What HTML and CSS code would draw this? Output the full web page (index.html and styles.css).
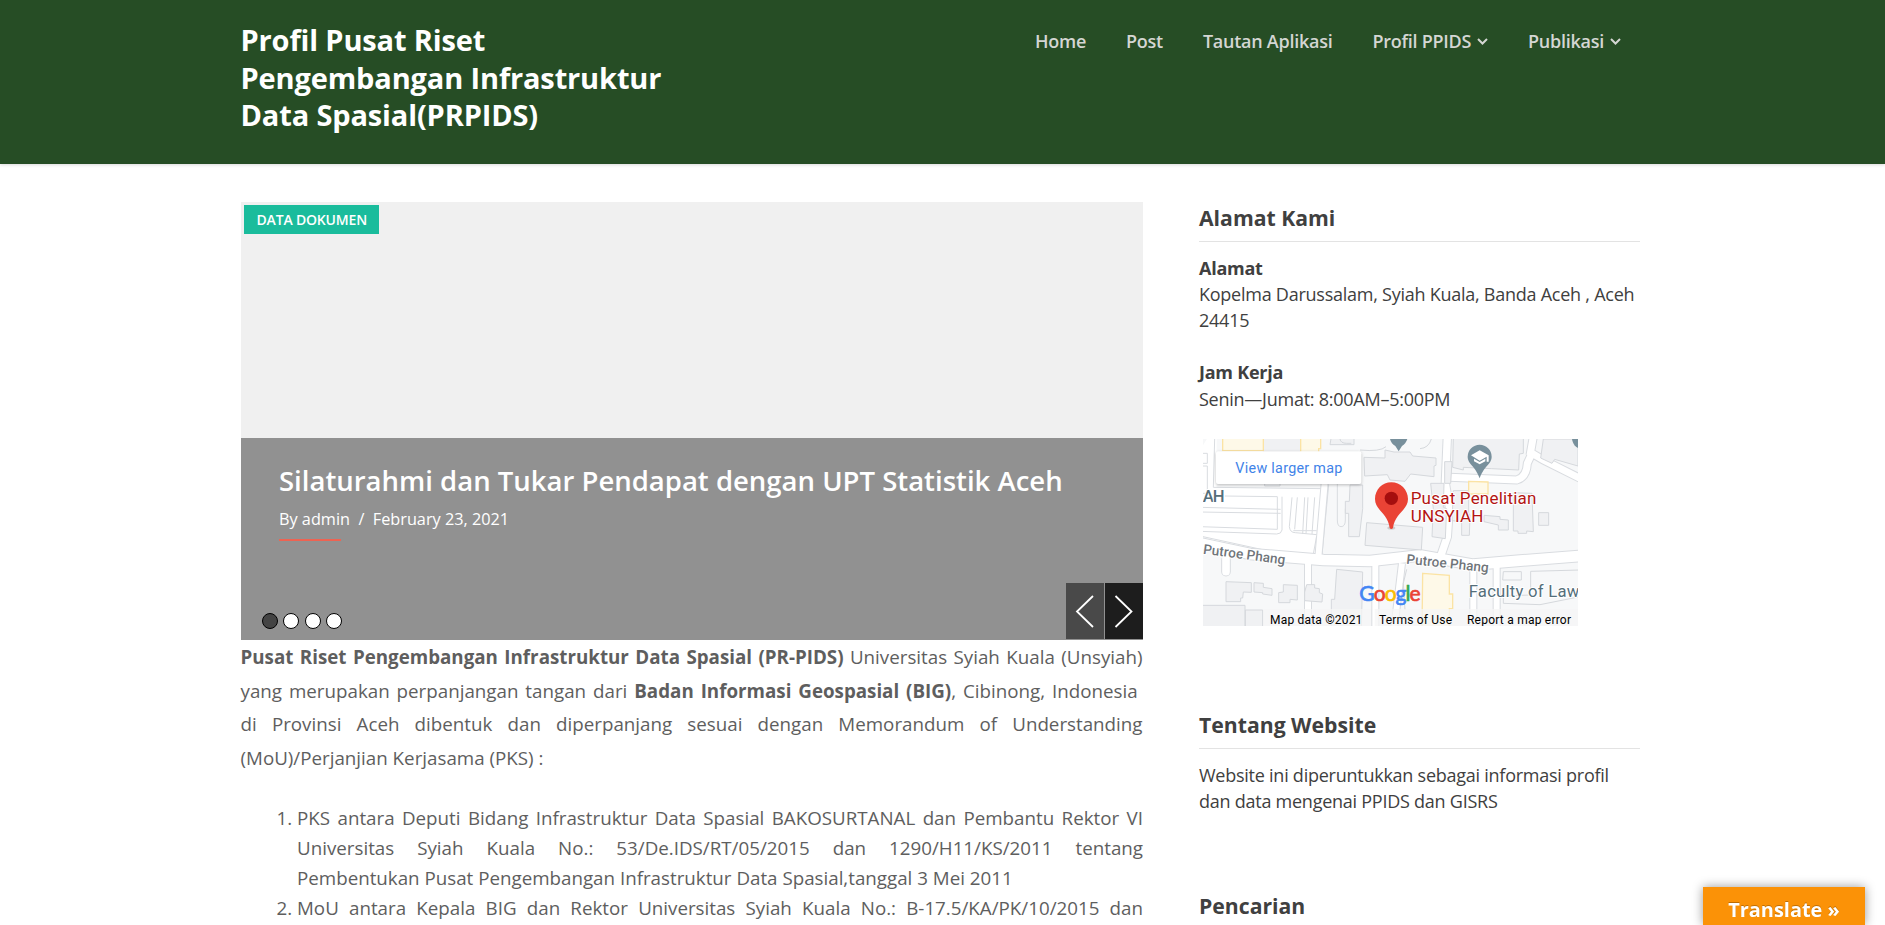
FILE: index.html
```html
<!DOCTYPE html>
<html lang="id">
<head>
<meta charset="utf-8">
<title>Profil Pusat Riset Pengembangan Infrastruktur Data Spasial(PRPIDS)</title>
<link rel="stylesheet" href="styles.css">
</head>
<body>
<header class="site-header">
  <h1 class="site-title">Profil Pusat Riset<br>Pengembangan Infrastruktur<br>Data Spasial(PRPIDS)</h1>
  <nav class="menu">
    <a>Home</a>
    <a>Post</a>
    <a>Tautan Aplikasi</a>
    <a>Profil PPIDS<svg class="chevron" viewBox="0 0 11 7"><path d="M1 1l4.5 4.5L10 1"/></svg></a>
    <a>Publikasi<svg class="chevron" viewBox="0 0 11 7"><path d="M1 1l4.5 4.5L10 1"/></svg></a>
  </nav>
</header>
<div class="page">
  <main class="content">
    <section class="slider">
      <span class="badge">DATA DOKUMEN</span>
      <div class="caption">
        <h2 class="slide-title">Silaturahmi dan Tukar Pendapat dengan UPT Statistik Aceh</h2>
        <p class="meta">By admin&nbsp; /&nbsp; February 23, 2021</p>
        <div class="accent"></div>
        <div class="dots"><i class="dot dot-on"></i><i class="dot"></i><i class="dot"></i><i class="dot"></i></div>
        <div class="arrows">
          <span class="arrow arrow-prev"><svg viewBox="0 0 38 56"><path d="M27 13L11 28.5L27 44"/></svg></span>
          <span class="arrow arrow-next"><svg viewBox="0 0 38 56"><path d="M10.500 13L26.500 28.500L10.500 44"/></svg></span>
        </div>
      </div>
    </section>
    <p class="intro"><strong>Pusat Riset Pengembangan Infrastruktur Data Spasial (PR-PIDS)</strong> Universitas Syiah Kuala (Unsyiah) yang merupakan perpanjangan tangan dari <strong>Badan Informasi Geospasial (BIG)</strong>, Cibinong, Indonesia&nbsp; di Provinsi Aceh dibentuk dan diperpanjang sesuai dengan Memorandum of Understanding (MoU)/Perjanjian Kerjasama (PKS) :</p>
    <ol class="agreements">
      <li>PKS antara Deputi Bidang Infrastruktur Data Spasial BAKOSURTANAL dan Pembantu Rektor VI Universitas Syiah Kuala No.: 53/De.IDS/RT/05/2015 dan 1290/H11/KS/2011 tentang Pembentukan Pusat Pengembangan Infrastruktur Data Spasial,tanggal 3 Mei 2011</li>
      <li class="item-open">MoU antara Kepala BIG dan Rektor Universitas Syiah Kuala No.: B-17.5/KA/PK/10/2015 dan</li>
    </ol>
  </main>
  <aside class="sidebar">
    <section class="widget widget-address">
      <h3 class="widget-title">Alamat Kami</h3>
      <p class="text"><strong>Alamat</strong><br>Kopelma Darussalam, Syiah Kuala, Banda Aceh , Aceh 24415</p>
      <p class="text"><strong>Jam Kerja</strong><br>Senin—Jumat: 8:00AM–5:00PM</p>
      <svg class="map" viewBox="39 27 1125 561">
        <rect x="39" y="27" width="1125" height="561" fill="#f7f8f9"/>
        <path d="M55 20L80 20V172L402 178L374 374L200 362L30 320V60z" fill="#fff"/>
        <path d="M30 70H52V100H30zM30 108H52V190H30M74 27L70 172L400 176M104 198L262 200V298L150 294L30 290M30 232L272 238M30 246L272 250M276 200V300Q274 312 260 312L30 304M306 202L298 290Q300 308 316 308L380 314M322 202L314 298M344 202L338 312M354 202L348 312M374 202L366 312M380 318L370 372L250 366L30 318M310 302H380M442 160V270Q442 290 453 290Q466 290 466 270V236M416 165L396 374L590 380L640 374" fill="none" stroke="#d9dce0" stroke-width="3"/>
        <path d="M30 340L180 372L400 390L540 393L690 376L850 404L990 392L1170 378" fill="none" stroke="#d9dce0" stroke-width="38"/>
        <path d="M354 390V600M556 395V600M636 400L612 600M850 404V600M920 410V600M404 160L385 382" fill="none" stroke="#d9dce0" stroke-width="24"/>
        <path d="M772 20L766 160L778 230L772 320L748 390" fill="none" stroke="#d9dce0" stroke-width="28"/>
        <path d="M778 142L980 150Q1010 142 1012 100L1026 70L1060 90L1170 145M1030 20L1020 76" fill="none" stroke="#d9dce0" stroke-width="27"/>
        <path d="M108 390V425" fill="none" stroke="#d9dce0" stroke-width="29" stroke-linecap="round"/>
        <g fill="none" stroke="#fff">
          <path d="M30 340L180 372L400 390L540 393L690 376L850 404L990 392L1170 378" stroke-width="32"/>
          <path d="M354 390V600M556 395V600M636 400L612 600M850 404V600M920 410V600M404 160L385 382" stroke-width="18"/>
          <path d="M772 20L766 160L778 230L772 320L748 390" stroke-width="22"/>
          <path d="M778 142L980 150Q1010 142 1012 100L1026 70L1060 90L1170 145M1030 20L1020 76" stroke-width="21"/>
          <path d="M108 380V425" stroke-width="23" stroke-linecap="round"/>
        </g>
        <g fill="#f0f1f3" stroke="#d5d8dc" stroke-width="3">
          <path d="M220 20H332V66H220zM224 158H270V168H224zM424 20H492V44H420zM522 82L585 84V60L612 66H660L668 78L738 84V106L732 108V140L662 132L645 154L600 150L592 134L524 138zM480 165H518V236L508 320H476V250H466V214H478zM530 278L698 292L694 360L525 346zM722 160L762 160L760 232L770 236L766 326L726 320L730 236zM786 95H764V160H782zM790 20H1000V70L988 72L986 120L905 116L820 112V120L788 112zM790 182L836 182V250L840 254L838 316L815 316V275L786 272zM970 188L1026 190L1030 305L1010 303V310H984V303H970zM1046 248H1076V286H1046zM882 256L930 260V268L955 270V300H925V285L882 275zM1060 27L1052 84L1086 100L1094 88L1164 108V27zM30 526H165V600H30zM166 540H218V600H166zM108 455L184 458V487L160 486L158 504H152V515H108zM192 458L220 460V472L246 476V496L218 492V488L192 486zM280 464L322 466V510L300 508V518H266V488L280 486zM350 464H374V474L388 476V488L398 492L396 516L344 512V486zM440 418L518 426L514 600H424V508H434z"/>
          <path d="M940 425H994V450H938zM1022 424L1170 420V500L1050 524L940 520V498L1022 495zM450 27Q452 40 470 40H484M510 60Q570 66 588 50M690 56Q716 54 724 27M650 418L640 460L645 540" fill="none"/>
        </g>
        <g fill="#fef9e8" stroke="#fbe3a4" stroke-width="4">
          <path d="M98 20H220V62H98zM332 20H392V56H386V70H332zM698 430L778 436V492H788V536H778V600H696zM836 154L894 156V192H836z"/>
        </g>
        <g fill="#78909c">
          <path d="M600 27H652Q647 42 636 48L626 64L616 48Q604 42 600 27z"/>
          <path d="M1146 27H1164V54L1158 50Q1148 42 1146 27z"/>
          <path d="M869 44a36 36 0 0 1 36 36c0 22-22 26-36 65c-14-39-36-43-36-65a36 36 0 0 1 36-36z"/>
        </g>
        <path d="M843 76L869 61L896 76V95H890V80L869 92zM852 86L869 96L886 86V94L869 103L852 94z" fill="#fff"/>
        <ellipse cx="604" cy="294" rx="12" ry="5" fill="#000" opacity=".15"/>
        <path d="M604 157c27 0 50 22 50 50c0 34-40 43-45 87q-5 6-10 0c-5-44-44-53-44-87c0-28 22-50 49-50z" fill="#ea4335"/>
        <circle cx="604" cy="205" r="20" fill="#a50e0e"/>
        <g class="map-label">
          <text x="38" y="215" class="place place-strong" textLength="66">AH</text>
          <text x="662" y="223" class="poi" textLength="377">Pusat Penelitian</text>
          <text x="662" y="276" class="poi" textLength="218">UNSYIAH</text>
          <text x="836" y="501" class="place" textLength="332">Faculty of Law</text>
          <text x="38" y="371" class="road" textLength="248" transform="rotate(7.5 38 371)">Putroe Phang</text>
          <text x="648" y="401" class="road" textLength="248" transform="rotate(6 648 401)">Putroe Phang</text>
        </g>
        <rect x="78" y="64" width="436" height="98" rx="6" fill="#fff" class="map-card"/>
        <text x="136" y="129" class="map-link" textLength="321">View larger map</text>
        <text x="508" y="513" class="logo" textLength="184"><tspan fill="#4285f4" stroke="#4285f4">G</tspan><tspan fill="#ea4335" stroke="#ea4335">o</tspan><tspan fill="#fbbc04" stroke="#fbbc04">o</tspan><tspan fill="#4285f4" stroke="#4285f4">g</tspan><tspan fill="#34a853" stroke="#34a853">l</tspan><tspan fill="#ea4335" stroke="#ea4335">e</tspan></text>
        <path d="M220 537H542V588H220zM554 537H1164V588H554z" fill="#f5f5f5" opacity=".75"/>
        <text x="240" y="583" class="legal" textLength="277">Map data ©2021</text>
        <text x="567" y="583" class="legal" textLength="219">Terms of Use</text>
        <text x="831" y="583" class="legal" textLength="312">Report a map error</text>
      </svg>
    </section>
    <section class="widget widget-about">
      <h3 class="widget-title">Tentang Website</h3>
      <p class="text">Website ini diperuntukkan sebagai informasi profil<br>dan data mengenai PPIDS dan GISRS</p>
    </section>
    <section class="widget">
      <h3 class="widget-title">Pencarian</h3>
    </section>
  </aside>
</div>
<div class="translate">Translate »</div>
</body>
</html>
```
FILE: styles.css
```css
* { box-sizing: border-box; }
html, body { height: 100%; }
body { margin: 0; overflow: hidden; background: #fff; color: #404040; font-family: "Open Sans", sans-serif; }
h1, h2, h3, p, ol { margin: 0; }

.site-header { display: flex; justify-content: space-between; align-items: flex-start; height: 164px; padding: 21px 264px 0 240.500px; background: #264d25; box-shadow: 0 1px 3px rgba(0, 0, 0, .15); }
.site-title { color: #fff; font-size: 29px; font-weight: 700; letter-spacing: -.14px; line-height: 37.7px; }
.menu { display: flex; gap: 40px; padding-top: 7px; color: #d4d6d3; font-size: 18px; font-weight: 600; letter-spacing: -.26px; line-height: 26px; }
.menu a { display: flex; align-items: center; }
.chevron { width: 11px; height: 7px; margin: 1px 0 0 6px; fill: none; stroke: #d4d6d3; stroke-width: 2; }

.page { display: flex; gap: 56px; width: 1640px; padding: 38px 0 0 241px; }
.content { flex: 0 0 902px; }
.slider { display: flex; flex-direction: column; justify-content: space-between; align-items: flex-start; height: 438px; background: #f0f0f0; }
.badge { display: block; width: 135px; height: 29px; margin: 3px 0 0 3px; padding-left: 12.500px; background: #1abc9c; color: #fff; font-size: 14px; font-weight: 600; letter-spacing: -.18px; line-height: 30px; white-space: nowrap; }
.caption { position: relative; width: 100%; height: 202px; padding: 24px 38px 0; background: #919191; color: #fff; }
.slide-title { font-size: 27.500px; font-weight: 600; line-height: 38px; }
.meta { margin-top: 7px; font-size: 16.250px; line-height: 24px; }
.accent { width: 62px; height: 2px; margin-top: 8px; background: #ee6352; }
.dots { position: absolute; left: 21px; bottom: 11px; display: flex; gap: 5.300px; }
.dot { width: 16px; height: 16px; border: 1px solid #000; border-radius: 50%; background: #fff; }
.dot-on { background: #444; }
.arrows { position: absolute; right: 0; bottom: 1px; display: flex; gap: 1px; }
.arrow { width: 38px; height: 56px; }
.arrow svg { display: block; width: 38px; height: 56px; fill: none; stroke: #fff; stroke-width: 1.800; }
.arrow-prev { background: #494949; }
.arrow-next { background: #1d1d1d; }

.intro { width: 902px; margin-left: -.5px; color: #5e5e5e; font-size: 18.750px; line-height: 33.500px; text-align: justify; }
.agreements { margin-top: 29px; padding-left: 56px; color: #5e5e5e; font-size: 18.750px; line-height: 30px; text-align: justify; }
.item-open { text-align-last: justify; }

.sidebar { flex: 0 0 441px; padding-top: 4px; }
.widget-title { height: 36px; border-bottom: 1px solid #e3e3e3; font-size: 21.200px; font-weight: 700; line-height: 24px; }
.text { font-size: 18px; letter-spacing: -.25px; line-height: 26.250px; }
.widget-address { height: 507px; }
.widget-address .text { margin-bottom: 26px; }
.widget-title + .text { margin-top: 12.600px; }
.widget-about { height: 181px; }
.map { display: block; width: 375px; height: 187px; margin: 27.400px 0 0 4px; font-family: Roboto, sans-serif; }
.map-label text { paint-order: stroke; stroke: #fff; stroke-width: 6px; stroke-linejoin: round; }
.place { fill: #546e7a; font-size: 50px; }
.place-strong { font-weight: 500; }
.poi { fill: #b31412; font-size: 51px; }
.road { fill: #70757a; font-size: 41px; font-weight: 500; }
.map-card { filter: drop-shadow(0 3px 4px rgba(0, 0, 0, .25)); }
.map-link { fill: #3f83e8; font-size: 43px; }
.logo { font-family: Lato, sans-serif; font-size: 63px; stroke-width: 2px; }
.legal { fill: #000; font-size: 36px; }

.translate { position: fixed; right: 20px; bottom: 0; width: 162px; height: 38px; background: #fb9207; color: #fff; box-shadow: 0 0 10px rgba(0, 0, 0, .4); font-size: 19.900px; font-weight: 700; line-height: 46px; text-align: center; text-shadow: 0 -1px 0 rgba(0, 0, 0, .25); }
```
